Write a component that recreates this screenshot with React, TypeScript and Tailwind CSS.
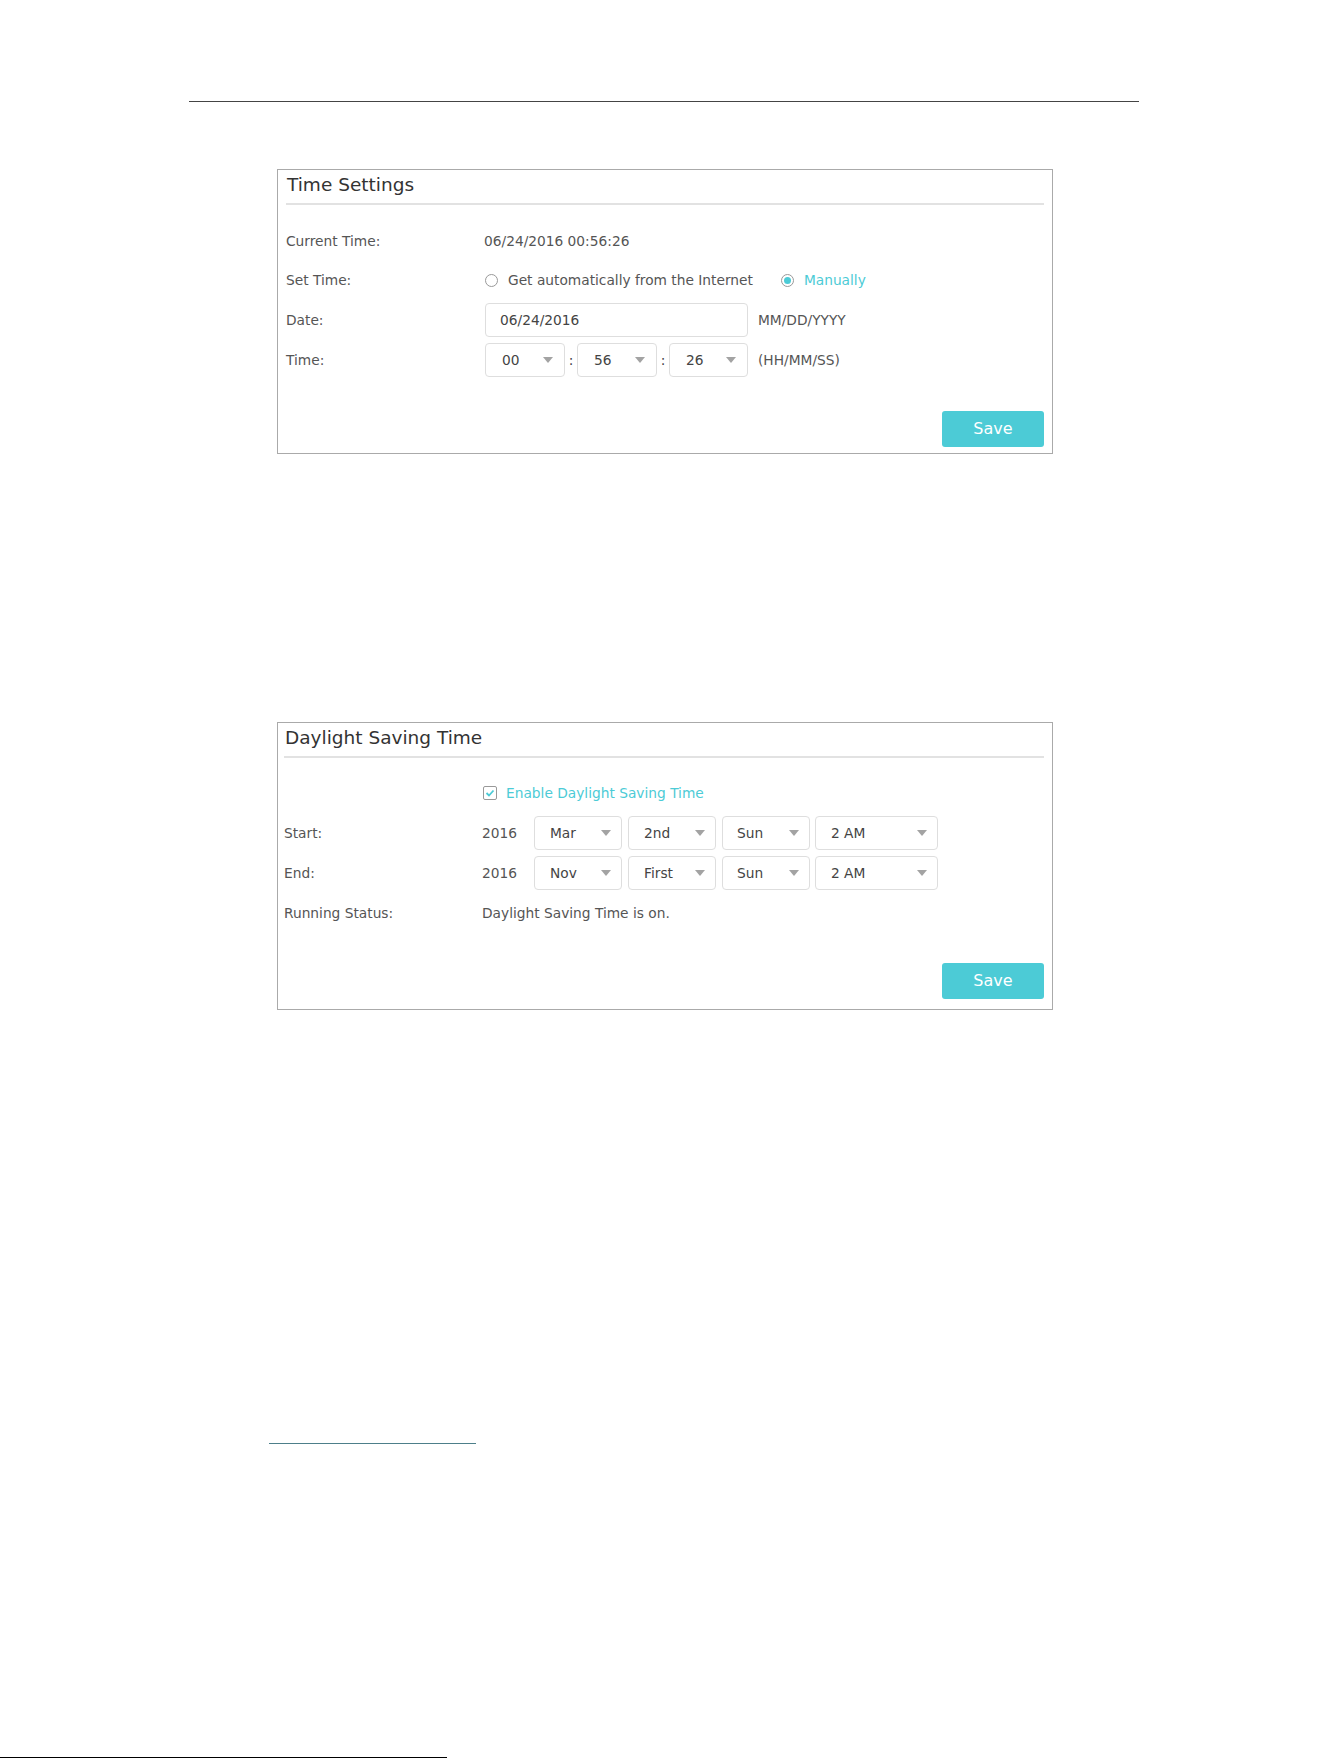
import React from "react";

const font = { fontFamily: '"DejaVu Sans", Verdana, sans-serif' };

function Arrow() {
  return (
    <svg width="10" height="6" viewBox="0 0 10 6" className="shrink-0">
      <polygon points="0,0 10,0 5,6" fill="#a3a3a3" />
    </svg>
  );
}

function Select({ value, w, pl = 16, pr = 11, h = 34 }: { value: string; w: number; pl?: number; pr?: number; h?: number }) {
  return (
    <div
      className="flex items-center justify-between rounded-[4px] border border-[#dedede] bg-white text-[#444]"
      style={{ width: w, height: h, paddingLeft: pl, paddingRight: pr }}
    >
      <span>{value}</span>
      <Arrow />
    </div>
  );
}

function Title({ children }: { children: React.ReactNode }) {
  return (
    <div className="border-b-2 border-[#e2e2e2] pt-[3px] pb-[6px]">
      <div className="text-[18.5px] leading-[24px] text-[#333] pl-[1px]">{children}</div>
    </div>
  );
}

function SaveBtn() {
  return (
    <div className="flex justify-end">
      <div className="flex h-[36px] w-[102px] items-center justify-center rounded-[3px] bg-[#4ccbd6] text-[16px] font-normal text-white">
        Save
      </div>
    </div>
  );
}

export default function App() {
  return (
    <div className="relative flex h-[1758px] w-[1330px] flex-col overflow-hidden bg-white text-[13.75px] text-[#555]" style={font}>
      <div className="ml-[189px] mt-[101px] h-px w-[950px] bg-[#444]" />

      {/* Time Settings */}
      <div className="ml-[277px] mt-[67px] w-[776px] border border-[#aaa] px-[8px] pb-[6px]">
        <Title>Time Settings</Title>
        <div className="mt-[18px] flex h-[36px] items-center">
          <div className="w-[198px]">Current Time:</div>
          <div>06/24/2016 00:56:26</div>
        </div>
        <div className="mt-[2px] flex h-[38px] items-center">
          <div className="w-[198px]">Set Time:</div>
          <div className="flex items-center">
            <div className="ml-[1px] h-[13px] w-[13px] rounded-full border border-[#999]" />
            <span className="ml-[10px]">Get automatically from the Internet</span>
            <div className="ml-[28px] flex h-[13px] w-[13px] items-center justify-center rounded-full border border-[#999]">
              <div className="h-[7px] w-[7px] rounded-full bg-[#4ccbd6]" />
            </div>
            <span className="ml-[10px] text-[#4ccbd6]">Manually</span>
          </div>
        </div>
        <div className="mt-[4px] flex h-[34px] items-center">
          <div className="w-[199px]">Date:</div>
          <div className="flex h-[34px] w-[263px] items-center rounded-[4px] border border-[#dedede] pl-[14px] text-[#444]">06/24/2016</div>
          <div className="ml-[10px]">MM/DD/YYYY</div>
        </div>
        <div className="mt-[6px] flex h-[34px] items-center">
          <div className="w-[199px]">Time:</div>
          <Select value="00" w={80} />
          <span className="w-[12px] text-center text-[#444]">:</span>
          <Select value="56" w={80} />
          <span className="w-[12px] text-center text-[#444]">:</span>
          <Select value="26" w={79} />
          <div className="ml-[10px]">(HH/MM/SS)</div>
        </div>
        <div className="mt-[34px]">
          <SaveBtn />
        </div>
      </div>

      {/* Daylight Saving Time */}
      <div className="ml-[277px] mt-[268px] w-[776px] border border-[#aaa] pl-[6px] pr-[8px] pb-[10px]">
        <Title>Daylight Saving Time</Title>
        <div className="mt-[17px] flex h-[36px] items-center">
          <div className="w-[199px]" />
          <div className="flex h-[14px] w-[14px] items-center justify-center rounded-[2px] border border-[#999]">
            <svg width="10" height="8" viewBox="0 0 10 8">
              <path d="M1.5 4 L4 6.5 L8.5 1.5" stroke="#4ccbd6" strokeWidth="1.8" fill="none" />
            </svg>
          </div>
          <span className="ml-[9px] text-[#4ccbd6]">Enable Daylight Saving Time</span>
        </div>
        <div className="mt-[5px] flex h-[34px] items-center">
          <div className="w-[198px]">Start:</div>
          <div className="w-[52px]">2016</div>
          <Select value="Mar" w={88} pl={15} pr={10} />
          <div className="w-[6px]" />
          <Select value="2nd" w={88} pl={15} pr={10} />
          <div className="w-[6px]" />
          <Select value="Sun" w={88} pl={14} pr={10} />
          <div className="w-[5px]" />
          <Select value="2 AM" w={123} pl={15} pr={10} />
        </div>
        <div className="mt-[6px] flex h-[34px] items-center">
          <div className="w-[198px]">End:</div>
          <div className="w-[52px]">2016</div>
          <Select value="Nov" w={88} pl={15} pr={10} />
          <div className="w-[6px]" />
          <Select value="First" w={88} pl={15} pr={10} />
          <div className="w-[6px]" />
          <Select value="Sun" w={88} pl={14} pr={10} />
          <div className="w-[5px]" />
          <Select value="2 AM" w={123} pl={15} pr={10} />
        </div>
        <div className="mt-[5px] flex h-[36px] items-center">
          <div className="w-[198px]">Running Status:</div>
          <div>Daylight Saving Time is on.</div>
        </div>
        <div className="mt-[32px]">
          <SaveBtn />
        </div>
      </div>

      <div className="ml-[269px] mt-[433px] h-px w-[207px] bg-[#4d7f8a]" />
      <div className="mt-[313px] h-px w-[447px] bg-black" />
    </div>
  );
}
